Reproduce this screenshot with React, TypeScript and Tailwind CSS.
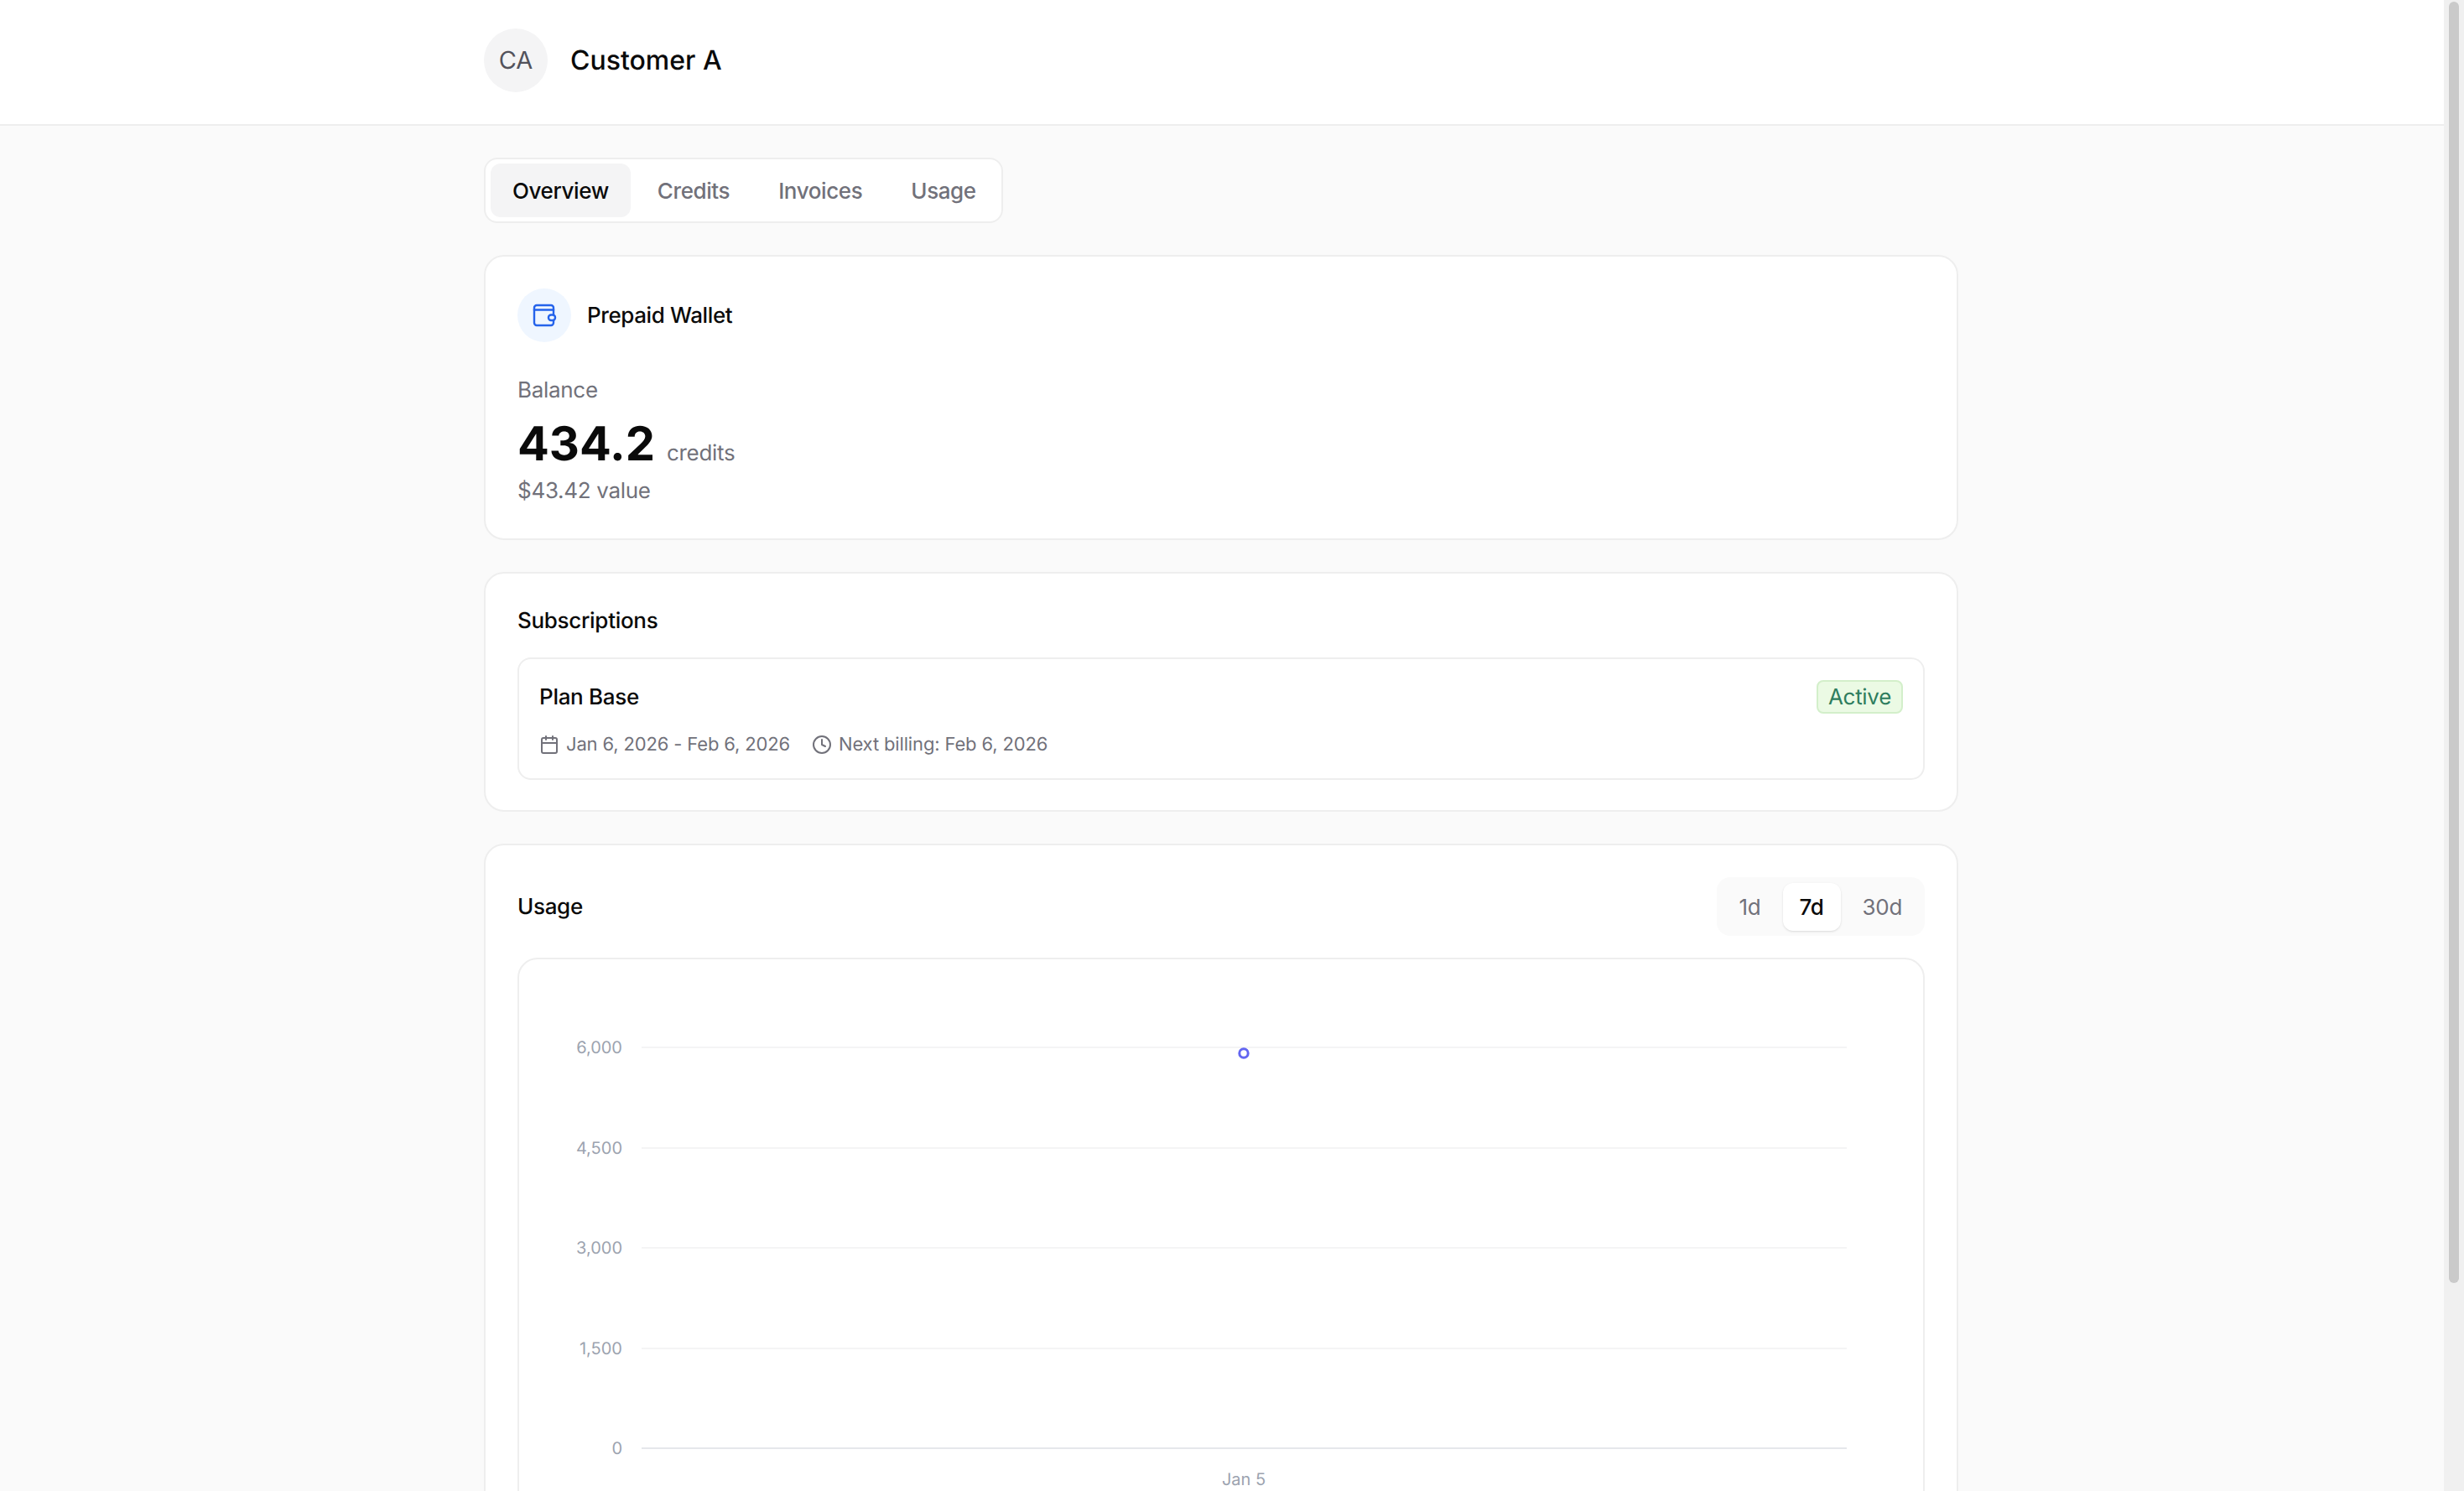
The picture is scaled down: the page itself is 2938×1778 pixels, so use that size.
import { Calendar, Clock } from "lucide-react";

const WalletIcon = () => (
  <svg width="32" height="32" viewBox="0 0 32 32" fill="none" stroke="#2563eb" strokeWidth="2.4" strokeLinecap="round" strokeLinejoin="round">
    <rect x="4" y="4" width="23" height="24" rx="3" />
    <path d="M4 9.5h23" />
    <rect x="21" y="15.5" width="8" height="6.5" rx="3" fill="#eff6ff" />
  </svg>
);

const tabs = ["Overview", "Credits", "Invoices", "Usage"];
const ranges = ["1d", "7d", "30d"];
const ticks = [
  { label: "6,000", y: 105 },
  { label: "4,500", y: 225 },
  { label: "3,000", y: 344 },
  { label: "1,500", y: 464 },
  { label: "0", y: 583 },
];

const UsageChart = () => (
  <svg width="1674" height="680" className="block">
    {ticks.map((tick) => (
      <g key={tick.label}>
        <line
          x1="146"
          x2="1583"
          y1={tick.y}
          y2={tick.y}
          stroke={tick.label === "0" ? "#e5e7eb" : "#f4f4f5"}
          strokeWidth="2"
        />
        <text x="123" y={tick.y + 7} textAnchor="end" fontSize="20" fill="#9ca3af">
          {tick.label}
        </text>
      </g>
    ))}
    <circle cx="864" cy="112" r="5.2" fill="#fff" stroke="#6366f1" strokeWidth="3" />
    <text x="864" y="627" textAnchor="middle" fontSize="20" fill="#9ca3af">
      Jan 5
    </text>
  </svg>
);

export default function App() {
  return (
    <div className="flex h-screen overflow-hidden bg-[#fafafa] font-['Inter',sans-serif] text-[#0a0a0a] [text-rendering:geometricPrecision]">
      <div className="flex-1 min-w-0 overflow-hidden">
        <header className="h-[150px] pb-[4px] bg-white border-b-2 border-[#eeeeee]">
          <div className="w-[1758px] ml-[577px] h-full flex items-center gap-[27px]">
            <div className="w-[76px] h-[76px] rounded-full bg-[#f4f4f5] text-[#52525b] text-[29px] flex items-center justify-center">
              CA
            </div>
            <h1 className="text-[32px] font-medium">Customer A</h1>
          </div>
        </header>

        <main className="w-[1758px] ml-[577px] pt-[38px] flex flex-col gap-[38px]">
          <nav className="self-start flex items-center gap-[6px] h-[78px] pl-[6px] pr-[4px] bg-white border-2 border-[#eeeeee] rounded-[16px]">
            {tabs.map((tab, i) => (
              <button
                key={tab}
                className={
                  i === 0
                    ? "h-[64px] px-[26px] rounded-[12px] bg-[#f4f4f5] text-[26px] tracking-[-0.4px] font-medium"
                    : "h-[64px] px-[26px] rounded-[12px] text-[26px] tracking-[-0.4px] font-medium text-[#71717a]"
                }
              >
                {tab}
              </button>
            ))}
          </nav>

          <section className="bg-white border-2 border-[#eeeeee] rounded-[24px] p-[38px]">
            <div className="flex items-center gap-[19px]">
              <div className="w-[64px] h-[64px] rounded-full bg-[#eff6ff] flex items-center justify-center">
                <WalletIcon />
              </div>
              <h2 className="text-[26px] tracking-[-0.4px] font-medium">Prepaid Wallet</h2>
            </div>
            <p className="mt-[38px] text-[26px] tracking-[-0.3px] leading-[40px] text-[#71717a]">Balance</p>
            <div className="mt-[11px] flex items-baseline gap-[14px]">
              <span className="text-[56px] leading-[64px] font-bold">434.2</span>
              <span className="text-[26px] tracking-[-0.3px] text-[#71717a]">credits</span>
            </div>
            <p className="mt-[7px] text-[26px] tracking-[-0.3px] leading-[36px] text-[#71717a]">$43.42 value</p>
          </section>

          <section className="bg-white border-2 border-[#eeeeee] rounded-[24px] px-[38px] pt-[38px] pb-[36px]">
            <h2 className="text-[26px] tracking-[-0.3px] leading-[38px] font-medium">Subscriptions</h2>
            <div className="mt-[24px] h-[146px] border-2 border-[#eeeeee] rounded-[16px] px-[24px] pt-[25px]">
              <div className="flex items-start justify-between">
                <h3 className="text-[26px] tracking-[-0.3px] leading-[42px] font-medium">Plan Base</h3>
                <span className="h-[40px] px-[12px] flex items-center rounded-[8px] bg-[#ebfae4] border-2 border-[#d3efca] text-[#2e7d5e] text-[26px] tracking-[-0.3px]">
                  Active
                </span>
              </div>
              <div className="mt-[19px] flex items-center gap-[26px] text-[22px] tracking-[-0.15px] leading-[32px] text-[#71717a]">
                <span className="flex items-center gap-[8px]">
                  <Calendar size={24} strokeWidth={2} />
                  Jan 6, 2026 - Feb 6, 2026
                </span>
                <span className="flex items-center gap-[8px]">
                  <Clock size={24} strokeWidth={2} />
                  Next billing: Feb 6, 2026
                </span>
              </div>
            </div>
          </section>

          <section className="bg-white border-2 border-[#eeeeee] rounded-[24px] p-[38px]">
            <div className="flex items-center justify-between">
              <h2 className="text-[26px] tracking-[-0.3px] font-medium">Usage</h2>
              <div className="flex items-center gap-[6px] h-[70px] px-[7px] bg-[#fafafa] rounded-[16px]">
                {ranges.map((range, i) => (
                  <button
                    key={range}
                    className={
                      i === 1
                        ? "h-[57px] px-[20px] rounded-[12px] bg-white shadow-sm text-[26px] tracking-[-0.3px] font-medium"
                        : "h-[57px] px-[20px] rounded-[12px] text-[26px] tracking-[-0.3px] text-[#71717a]"
                    }
                  >
                    {range}
                  </button>
                ))}
              </div>
            </div>
            <div className="mt-[26px] border-2 border-[#eeeeee] rounded-[24px]">
              <UsageChart />
            </div>
          </section>
        </main>
      </div>

      <aside className="w-[24px] bg-[#f0f0f0] shrink-0">
        <div className="mx-[6px] mt-[2px] w-[12px] h-[1528px] rounded-full bg-[#cacaca]" />
      </aside>
    </div>
  );
}
